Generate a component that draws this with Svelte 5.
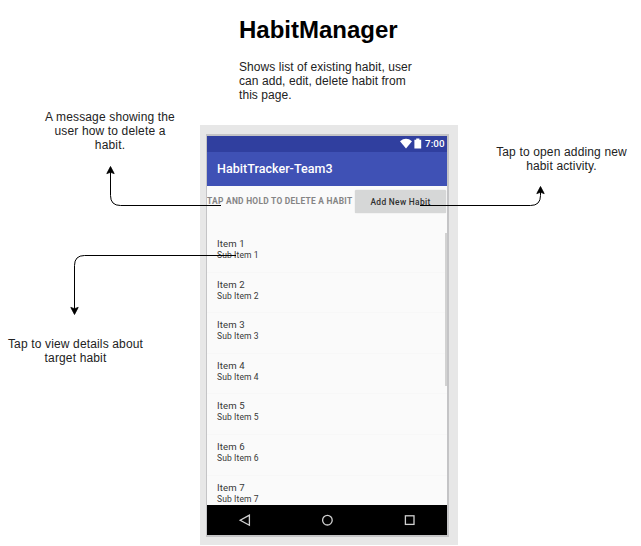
<script>
  const items = [1, 2, 3, 4, 5, 6, 7];
</script>

<main class="canvas">
  <header class="intro">
    <h1>HabitManager</h1>
    <p>Shows list of existing habit, user<br />can add, edit, delete habit from<br />this page.</p>
  </header>

  <p class="note delete-note">A message showing the<br />user how to delete a<br />habit.</p>
  <p class="note add-note">Tap to open adding new<br />habit activity.</p>
  <p class="note view-note">Tap to view details about<br />target habit</p>

  <section class="phone">
    <div class="screen">
      <div class="status">
        <svg width="24" height="12" viewBox="0 0 24 12" fill="#fff">
          <path d="M0 3.2Q6 -1.6 12 3.2L6 10.6Z" />
          <path d="M14.4 1.7H16.2V.4H19.4V1.7H21.2V10.6H14.4Z" />
        </svg>
        <span class="clock">7:00</span>
      </div>
      <div class="appbar"><span class="app-name">HabitTracker-Team3</span></div>
      <div class="content">
        <div class="actions">
          <span class="hint">TAP AND HOLD TO DELETE A HABIT</span>
          <button>Add New Habit</button>
        </div>
        <ul>
          {#each items as n}
            <li>
              <span class="title">Item {n}</span>
              <span class="sub">Sub Item {n}</span>
            </li>
          {/each}
        </ul>
        <i class="scrollbar"></i>
      </div>
      <nav>
        <svg width="240" height="30" viewBox="0 0 240 30" fill="none" stroke="#d0d0d0" stroke-width="1.3">
          <path d="M42.4 10.2V20.2L33.2 15.2Z" />
          <circle cx="120.4" cy="15.2" r="4.8" />
          <rect x="198.4" y="10.8" width="8.6" height="8.6" />
        </svg>
      </nav>
    </div>
  </section>

  <svg class="arrows" width="641" height="546" viewBox="0 0 641 546" fill="none" stroke="#000">
    <path d="M221 205.5H120.5Q110.500 205.500 110.500 195.500V170" />
    <path d="M420 205.5H530.5Q540.500 205.500 540.500 195.500V190" />
    <path d="M236 255.500H84.500Q74.500 255.500 74.500 265.500V310" />
    <g fill="#000" stroke-width=".8">
      <path d="M110.500 166.500L114.200 173.600L110.500 172.300L106.800 173.600Z" />
      <path d="M540.500 186.500L544.200 193.600L540.500 192.300L536.800 193.600Z" />
      <path d="M74.500 314.500L78.200 307.400L74.500 308.700L70.800 307.400Z" />
    </g>
  </svg>
</main>

<style>
  .canvas {
    position: relative;
    width: 641px;
    height: 546px;
    overflow: hidden;
    background: #fff;
    color: #222;
    font: 12px/14px "Liberation Sans", Arial, sans-serif;
  }
  p, h1, ul { margin: 0; padding: 0; }
  .intro { position: absolute; left: 239px; top: 16px; white-space: nowrap; }
  h1 { color: #000; font-size: 24px; line-height: 28px; }
  .intro p { margin-top: 16px; letter-spacing: .06px; }
  .note { position: absolute; text-align: center; white-space: nowrap; letter-spacing: .15px; }
  .delete-note { left: 30px; top: 110px; width: 160px; }
  .add-note { left: 482px; top: 145px; width: 159px; }
  .view-note { left: 0; top: 337px; width: 151px; }
  .phone {
    position: absolute;
    left: 200px;
    top: 125px;
    width: 258px;
    height: 420px;
    box-sizing: border-box;
    padding: 9px 9px 8px 6px;
    background: #e7e7e7;
    font-family: Roboto, sans-serif;
  }
  .screen {
    display: flex;
    flex-direction: column;
    width: 240px;
    height: 399px;
    border: solid #c4c4c6;
    border-width: 2px 2px 2px 1px;
    background: #fafafa;
  }
  .status {
    display: flex;
    align-items: center;
    height: 16px;
    padding-left: 193px;
    background: #303f9f;
    color: #fff;
    flex: none;
  }
  .clock { margin-left: 1px; font-size: 9.8px; font-weight: 500; line-height: 16px; letter-spacing: .1px; }
  .appbar {
    display: flex;
    align-items: center;
    height: 34px;
    padding-left: 10px;
    background: #3f51b5;
    color: #fff;
    flex: none;
  }
  .app-name { font-size: 12.5px; font-weight: 500; letter-spacing: .04px; white-space: nowrap; }
  .content { position: relative; height: 319px; overflow: hidden; flex: none; }
  .actions { display: flex; align-items: center; height: 30px; margin-bottom: 16px; }
  .hint { width: 148px; font-size: 8.4px; font-weight: 700; color: #858585; white-space: nowrap; line-height: 12px; letter-spacing: .28px; }
  button {
    width: 91px;
    height: 23px;
    margin-top: 1px;
    padding: 0;
    border: 0;
    border-radius: 1.5px;
    background: #d6d7d7;
    box-shadow: 0 0 1px #bbb;
    color: #303030;
    font: 500 8.4px/12px Roboto, sans-serif;
    letter-spacing: .32px;
    white-space: nowrap;
  }
  ul { list-style: none; }
  li {
    display: flex;
    flex-direction: column;
    box-sizing: border-box;
    height: 40.6px;
    padding: 6px 0 0 10px;
    border-bottom: 1px solid #f7f7f7;
    color: #383838;
    white-space: nowrap;
  }
  .title { font-size: 9.6px; line-height: 11px; letter-spacing: .12px; }
  .sub { font-size: 8.5px; line-height: 12px; letter-spacing: .12px; }
  .scrollbar { position: absolute; right: 0; top: 47px; width: 2px; height: 153px; background: #d2d2d2; }
  nav { height: 30px; background: #000; flex: none; }
  nav svg, .status svg { display: block; }
  .arrows { position: absolute; left: 0; top: 0; pointer-events: none; }
</style>
